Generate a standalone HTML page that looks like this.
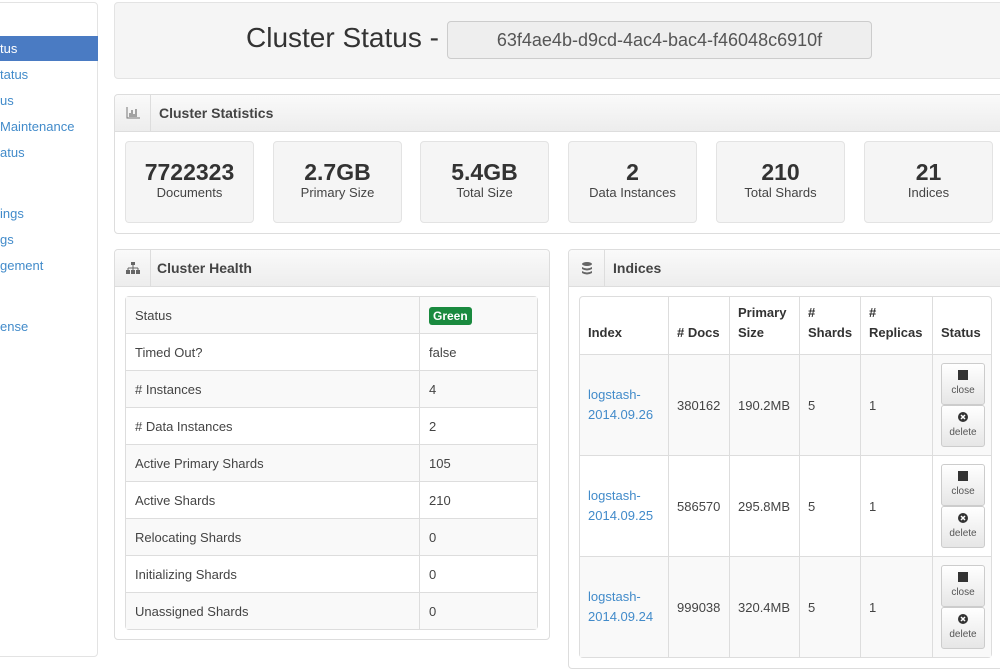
<!DOCTYPE html>
<html><head><meta charset="utf-8"><style>
*{box-sizing:border-box;margin:0;padding:0}
body{width:1000px;height:660px;overflow:hidden;background:#fff;font-family:"Liberation Sans",Arial,sans-serif;color:#333;font-size:13px;position:relative}
.abs{position:absolute}
.side{left:-5px;top:2px;width:103px;height:655px;border:1px solid #e3e3e3;border-radius:4px;background:#fff}
.nav{position:absolute;left:0;width:98px;color:#428bca;font-size:13px;line-height:25px;white-space:nowrap;overflow:hidden}
.nav.act{background:#4a7bc3;color:#fff}
.hdr{left:114px;top:2px;width:890px;height:77px;background:#f5f5f5;border:1px solid #e3e3e3;border-radius:4px}
.title{left:246px;top:22px;font-size:28px;color:#333;white-space:nowrap}
.uuid{left:447px;top:21px;width:425px;height:38px;background:#eee;border:1px solid #ccc;border-radius:4px;font-size:18px;color:#555;text-align:center;line-height:36px}
.panel{border:1px solid #ddd;border-radius:4px;background:#fff}
.ph{position:absolute;left:0;top:0;right:0;height:37px;background:linear-gradient(#fafafa,#ededed);border-bottom:1px solid #ddd;border-radius:4px 4px 0 0}
.pi{position:absolute;left:0;top:0;width:36px;height:36px;border-right:1px solid #ddd;display:flex;align-items:center;justify-content:center}
.pt{position:absolute;left:44px;top:0;line-height:36px;font-weight:bold;font-size:14px;color:#444}
.stat{position:absolute;top:141px;width:129px;height:82px;background:#f5f5f5;border:1px solid #e3e3e3;border-radius:4px;text-align:center}
.stat b{display:block;font-size:23px;margin-top:17px;line-height:26px;color:#333}
.stat span{display:block;font-size:13px;color:#444;line-height:16px}
table{border-collapse:separate;border-spacing:0;border:1px solid #ddd;border-radius:4px;position:absolute;table-layout:fixed}
td,th{border-top:1px solid #ddd;border-left:1px solid #ddd;text-align:left;vertical-align:middle;font-size:13px}
tr:first-child td,tr:first-child th{border-top:none}
td:first-child,th:first-child{border-left:none}
.h td{height:37px;padding-left:9px;color:#444}
.h tr:first-child td{height:36px}
.h tr:nth-child(odd) td{background:#f9f9f9}
.badge{background:#1a8a3f;color:#fff;font-weight:bold;font-size:12px;padding:2px 4px;border-radius:3px}
.ix th{height:57px;padding:0 8px;font-weight:bold;color:#333;vertical-align:bottom;padding-bottom:11px;line-height:20px;white-space:nowrap}
.ix td{height:101px;padding:0 8px;color:#444}
.ix tr:nth-child(even) td{background:#f9f9f9}
.ix a{color:#428bca;text-decoration:none;line-height:20px}
.btn{display:block;width:44px;height:42px;border:1px solid #ccc;border-radius:3px;background:linear-gradient(#fff,#e6e6e6);text-align:center;font-size:10px;color:#555;margin:0 auto;padding-top:6px;line-height:14px}
.btn svg{display:block;margin:0 auto 4px}
</style></head><body>
<div class="abs side"></div>
<div class="nav act" style="top:36px">tus</div>
<div class="nav" style="top:62px">tatus</div>
<div class="nav" style="top:88px">us</div>
<div class="nav" style="top:114px">Maintenance</div>
<div class="nav" style="top:140px">atus</div>
<div class="nav" style="top:201px">ings</div>
<div class="nav" style="top:227px">gs</div>
<div class="nav" style="top:253px">gement</div>
<div class="nav" style="top:314px">ense</div>

<div class="abs hdr"></div>
<div class="abs title">Cluster Status -</div>
<div class="abs uuid">63f4ae4b-d9cd-4ac4-bac4-f46048c6910f</div>

<div class="abs panel" style="left:114px;top:94px;width:890px;height:140px">
<div class="ph"><div class="pi"><svg width="14" height="12"><path d="M1 0v11h13" stroke="#777" fill="none"/><path d="M4 6v4M6 3v7M8 7v3M10 2v8" stroke="#777" stroke-width="1.3"/></svg></div><div class="pt">Cluster Statistics</div></div>
</div>
<div class="stat" style="left:125px"><b>7722323</b><span>Documents</span></div>
<div class="stat" style="left:273px"><b>2.7GB</b><span>Primary Size</span></div>
<div class="stat" style="left:420px"><b>5.4GB</b><span>Total Size</span></div>
<div class="stat" style="left:568px"><b>2</b><span>Data Instances</span></div>
<div class="stat" style="left:716px"><b>210</b><span>Total Shards</span></div>
<div class="stat" style="left:864px"><b>21</b><span>Indices</span></div>

<div class="abs panel" style="left:114px;top:249px;width:436px;height:391px">
<div class="ph"><div class="pi"><svg width="14" height="12"><rect x="5" y="0" width="4" height="3" fill="#666"/><path d="M7 3v3M2 6h10M2 6v2M7 6v2M12 6v2" stroke="#666" fill="none"/><rect x="0" y="8" width="4" height="4" fill="#666"/><rect x="5" y="8" width="4" height="4" fill="#666"/><rect x="10" y="8" width="4" height="4" fill="#666"/></svg></div><div class="pt" style="left:42px">Cluster Health</div></div>
</div>
<table class="h" style="left:125px;top:296px;width:413px">
<tr><td style="width:293px">Status</td><td><span class="badge">Green</span></td></tr>
<tr><td>Timed Out?</td><td>false</td></tr>
<tr><td># Instances</td><td>4</td></tr>
<tr><td># Data Instances</td><td>2</td></tr>
<tr><td>Active Primary Shards</td><td>105</td></tr>
<tr><td>Active Shards</td><td>210</td></tr>
<tr><td>Relocating Shards</td><td>0</td></tr>
<tr><td>Initializing Shards</td><td>0</td></tr>
<tr><td>Unassigned Shards</td><td>0</td></tr>
</table>

<div class="abs panel" style="left:568px;top:249px;width:440px;height:420px">
<div class="ph"><div class="pi"><svg width="12" height="13"><ellipse cx="6" cy="2" rx="5" ry="2" fill="#666"/><path d="M1 5q5 3 10 0v2q-5 3-10 0zM1 9q5 3 10 0v2q-5 3-10 0z" fill="#666"/></svg></div><div class="pt">Indices</div></div>
</div>
<table class="ix" style="left:579px;top:296px;width:413px">
<colgroup><col style="width:88px"><col style="width:61px"><col style="width:70px"><col style="width:61px"><col style="width:72px"><col></colgroup>
<tr><th>Index</th><th># Docs</th><th>Primary<br>Size</th><th>#<br>Shards</th><th>#<br>Replicas</th><th>Status</th></tr>
<tr><td><a>logstash-<br>2014.09.26</a></td><td>380162</td><td>190.2MB</td><td>5</td><td>1</td><td><span class="btn"><svg width="10" height="10"><rect width="10" height="10" fill="#333"/></svg>close</span><span class="btn"><svg width="10" height="10"><circle cx="5" cy="5" r="5" fill="#333"/><path d="M3 3l4 4M7 3l-4 4" stroke="#fff" stroke-width="1.5"/></svg>delete</span></td></tr>
<tr><td><a>logstash-<br>2014.09.25</a></td><td>586570</td><td>295.8MB</td><td>5</td><td>1</td><td><span class="btn"><svg width="10" height="10"><rect width="10" height="10" fill="#333"/></svg>close</span><span class="btn"><svg width="10" height="10"><circle cx="5" cy="5" r="5" fill="#333"/><path d="M3 3l4 4M7 3l-4 4" stroke="#fff" stroke-width="1.5"/></svg>delete</span></td></tr>
<tr><td><a>logstash-<br>2014.09.24</a></td><td>999038</td><td>320.4MB</td><td>5</td><td>1</td><td><span class="btn"><svg width="10" height="10"><rect width="10" height="10" fill="#333"/></svg>close</span><span class="btn"><svg width="10" height="10"><circle cx="5" cy="5" r="5" fill="#333"/><path d="M3 3l4 4M7 3l-4 4" stroke="#fff" stroke-width="1.5"/></svg>delete</span></td></tr>
</table>
</body></html>
